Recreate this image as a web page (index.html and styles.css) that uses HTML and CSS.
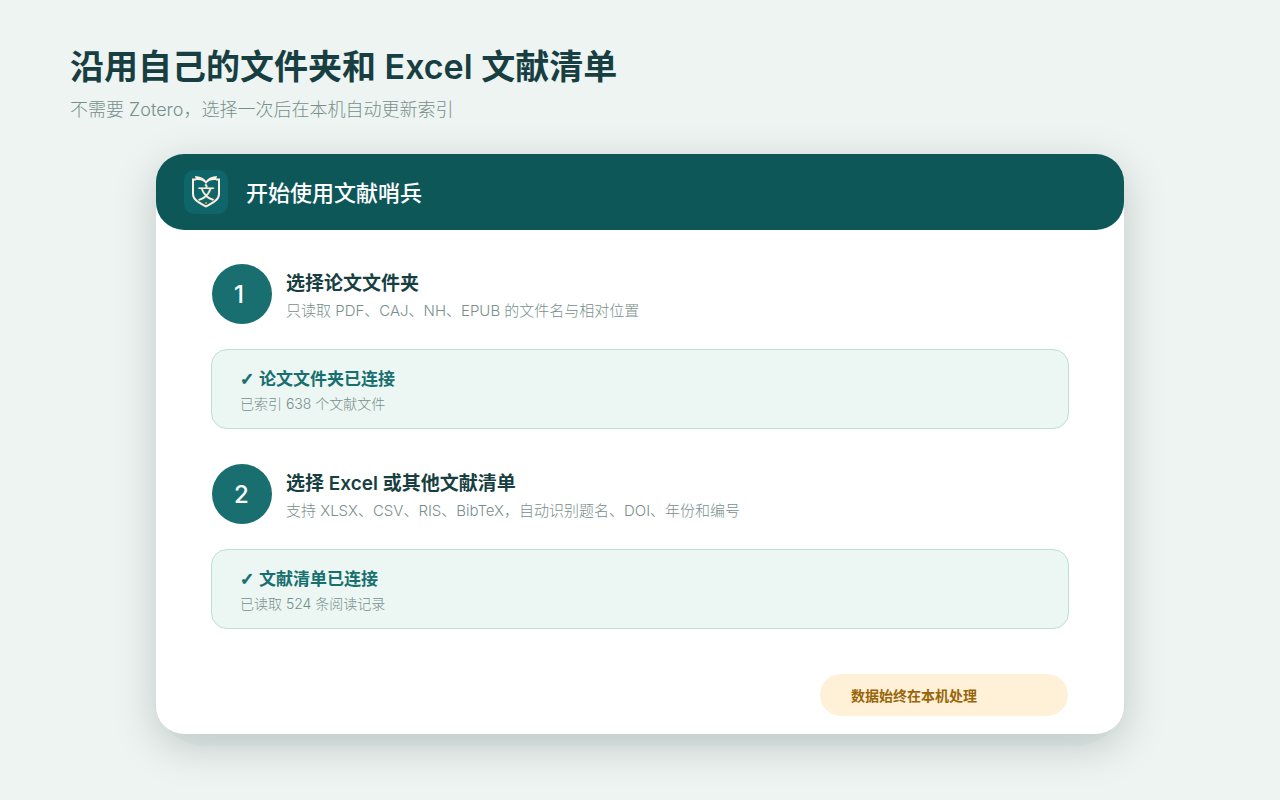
FILE: index.html
```html
<!DOCTYPE html>
<html lang="zh-CN">
<head>
  <meta charset="UTF-8">
  <meta name="viewport" content="width=device-width, initial-scale=1.0">
  <title>文献哨兵</title>
  <link rel="stylesheet" href="styles.css">
</head>
<body>
  <header class="page-header">
    <h1>沿用自己的文件夹和 Excel 文献清单</h1>
    <p>不需要 Zotero，选择一次后在本机自动更新索引</p>
  </header>

  <main class="card">
    <div class="card-header">
      <svg class="logo" viewBox="0 0 44 44">
        <rect width="44" height="44" rx="10" fill="#0f666a"/>
        <path d="M12 9.500H9V24C9 30 15 32.500 22 36.500C29 32.500 35 30 35 24V9.500H32" fill="none" stroke="#fdeedd" stroke-width="2"/>
        <path d="M11 6C16 6.500 20 8 22 11C24 8 28 6.500 33 6L32 10C27 9.500 24 11 22 14C20 11 17 9.500 12 10Z" fill="#fdeedd"/>
        <text class="logo-text" x="22" y="29" text-anchor="middle">文</text>
        <circle cx="22" cy="33" r="1" fill="#e0a050"/>
      </svg>
      <h2>开始使用文献哨兵</h2>
    </div>

    <div class="card-body">
      <section class="step">
        <div class="step-head">
          <span class="step-number">1</span>
          <div class="step-text">
            <h3>选择论文文件夹</h3>
            <p>只读取 PDF、CAJ、NH、EPUB 的文件名与相对位置</p>
          </div>
        </div>
        <div class="status">
          <strong><span class="check">✓</span>论文文件夹已连接</strong>
          <p>已索引 638 个文献文件</p>
        </div>
      </section>

      <section class="step">
        <div class="step-head">
          <span class="step-number">2</span>
          <div class="step-text">
            <h3>选择 Excel 或其他文献清单</h3>
            <p>支持 XLSX、CSV、RIS、BibTeX，自动识别题名、DOI、年份和编号</p>
          </div>
        </div>
        <div class="status">
          <strong><span class="check">✓</span>文献清单已连接</strong>
          <p>已读取 524 条阅读记录</p>
        </div>
      </section>

      <div class="privacy">数据始终在本机处理</div>
    </div>
  </main>
</body>
</html>
```
FILE: styles.css
```css
* {
  box-sizing: border-box;
}
body {
  font-family: Inter, 'Noto Sans CJK SC', sans-serif;
  background-color: #edf4f2;
  color: #173f42;
  margin: 0;
  padding: 43px 70px 66px;
}
h1, h2, h3, p {
  margin: 0;
}
h1 {
  font-size: 34px;
  line-height: 48px;
  font-weight: 600;
}
p {
  color: #788f8b;
  font-weight: 300;
}
.page-header p {
  font-size: 18px;
  line-height: 28px;
  margin-top: 5px;
}
.card {
  position: relative;
  background-color: #fff;
  border-radius: 28px;
  margin: 30px 86px 0;
  box-shadow: 0 12px 44px rgba(0, 0, 0, 0.18);
}
/* tinted edge under the card */
.card::after {
  content: '';
  position: absolute;
  z-index: -1;
  left: 0;
  right: 0;
  bottom: -12px;
  height: 120px;
  border-radius: 48px;
  background-color: rgba(170, 220, 210, 0.12);
}
.card-header {
  display: flex;
  align-items: center;
  gap: 18px;
  padding: 16px 28px;
  background-color: #0d5759;
  border-radius: 28px;
}
.logo {
  width: 44px;
  height: 44px;
}
.logo-text {
  fill: #fdeedd;
  font-size: 17px;
  font-weight: 500;
}
h2 {
  padding-top: 2px;
  color: #fff;
  font-size: 22px;
  line-height: 42px;
  font-weight: 500;
}
.card-body {
  display: flex;
  flex-direction: column;
  gap: 35px;
  padding: 34px 55px 18px;
}
.step-head {
  display: flex;
  align-items: center;
  gap: 14px;
  padding-left: 1px;
}
.step-number {
  width: 60px;
  height: 60px;
  padding-left: 22px;
  border-radius: 50%;
  background-color: #196f70;
  color: #fff;
  font-size: 24px;
  line-height: 62px;
  font-weight: 500;
}
.step-text {
  padding-top: 6px;
}
h3 {
  font-size: 19px;
  line-height: 28px;
  font-weight: 600;
}
.step-text p {
  font-size: 15px;
  line-height: 26px;
}
.status {
  margin-top: 25px;
  padding: 16px 28px 12px;
  background-color: #ecf6f3;
  border: 1px solid #bcdfd5;
  border-radius: 16px;
}
.status strong {
  display: block;
  color: #176f70;
  font-size: 17px;
  line-height: 26px;
  font-weight: 600;
}
.status p {
  font-size: 14px;
  line-height: 24px;
}
.check {
  display: inline-block;
  width: 19px;
  font-family: 'DejaVu Sans', sans-serif;
  -webkit-text-stroke: 1px #176f70;
}
.privacy {
  align-self: flex-end;
  width: 248px;
  margin: 10px 1px 0 0;
  padding: 1px 31px 0;
  border-radius: 21px;
  background-color: #fff0d8;
  color: #986508;
  font-size: 14px;
  line-height: 41px;
  font-weight: 600;
}
```
